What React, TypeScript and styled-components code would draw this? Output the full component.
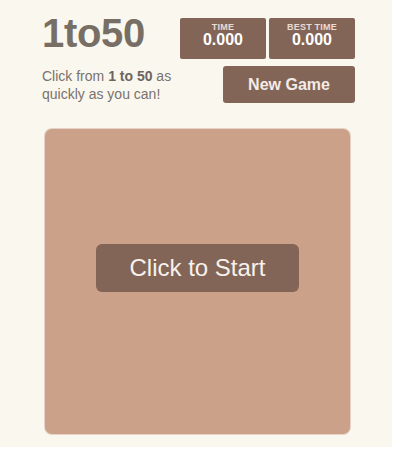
import React from "react";
import styled, { createGlobalStyle } from "styled-components";

const Global = createGlobalStyle`
  html, body { margin: 0; padding: 0; background: #ffffff; }
  body { font-family: "Liberation Sans", Arial, sans-serif; }
`;

const Page = styled.div`
  width: 392px;
  height: 447px;
  background: #faf7ef;
  padding: 11px 0 0 42px;
  box-sizing: border-box;
`;

const Container = styled.div`
  width: 313px;
  display: flex;
  flex-direction: column;
`;

const Header = styled.div`
  display: grid;
  grid-template-columns: 1fr auto;
  row-gap: 8px;
  align-items: start;
`;

const Title = styled.h1`
  margin: 0;
  font-size: 40px;
  font-weight: bold;
  color: #776e65;
  line-height: 44px;
  letter-spacing: -0.3px;
`;

const Scores = styled.div`
  display: flex;
  gap: 3px;
  margin-top: 7px;
`;

const ScoreBox = styled.div`
  width: 86px;
  height: 41px;
  background: #836558;
  border-radius: 2px;
  display: flex;
  flex-direction: column;
  align-items: center;
  padding-top: 5px;
  box-sizing: border-box;
`;

const ScoreLabel = styled.div`
  font-size: 9px;
  font-weight: bold;
  color: #eadbd3;
  line-height: 9px;
  letter-spacing: 0.2px;
`;

const ScoreValue = styled.div`
  font-size: 16px;
  font-weight: bold;
  color: #ffffff;
  line-height: 16px;
`;

const Subtitle = styled.p`
  margin: 0;
  font-size: 14px;
  line-height: 18px;
  color: #7a726c;
  strong { color: #6d655e; }
`;

const NewGameButton = styled.button`
  width: 132px;
  height: 37px;
  background: #836558;
  border: none;
  border-radius: 3px;
  color: #f3ebe6;
  font-family: inherit;
  font-size: 16px;
  font-weight: bold;
  margin-left: auto;
  margin-top: -1px;
  cursor: pointer;
`;

const Board = styled.div`
  width: 305px;
  height: 305px;
  margin: 26px 0 0 3px;
  background: #cca18a;
  border-radius: 7px;
  box-shadow: 0 0 0 1px #e6d2c6;
  display: flex;
  justify-content: center;
  align-items: flex-start;
  padding-top: 115px;
  box-sizing: border-box;
`;

const StartButton = styled.button`
  width: 203px;
  height: 48px;
  background: #836558;
  border: none;
  border-radius: 6px;
  color: #f7f1ec;
  font-family: inherit;
  font-size: 24px;
  cursor: pointer;
`;

export default function App() {
  return (
    <>
      <Global />
      <Page>
        <Container>
          <Header>
            <Title>1to50</Title>
            <Scores>
              <ScoreBox>
                <ScoreLabel>TIME</ScoreLabel>
                <ScoreValue>0.000</ScoreValue>
              </ScoreBox>
              <ScoreBox>
                <ScoreLabel>BEST TIME</ScoreLabel>
                <ScoreValue>0.000</ScoreValue>
              </ScoreBox>
            </Scores>
            <Subtitle>
              Click from <strong>1 to 50</strong> as
              <br />
              quickly as you can!
            </Subtitle>
            <NewGameButton>New Game</NewGameButton>
          </Header>
          <Board>
            <StartButton>Click to Start</StartButton>
          </Board>
        </Container>
      </Page>
    </>
  );
}
